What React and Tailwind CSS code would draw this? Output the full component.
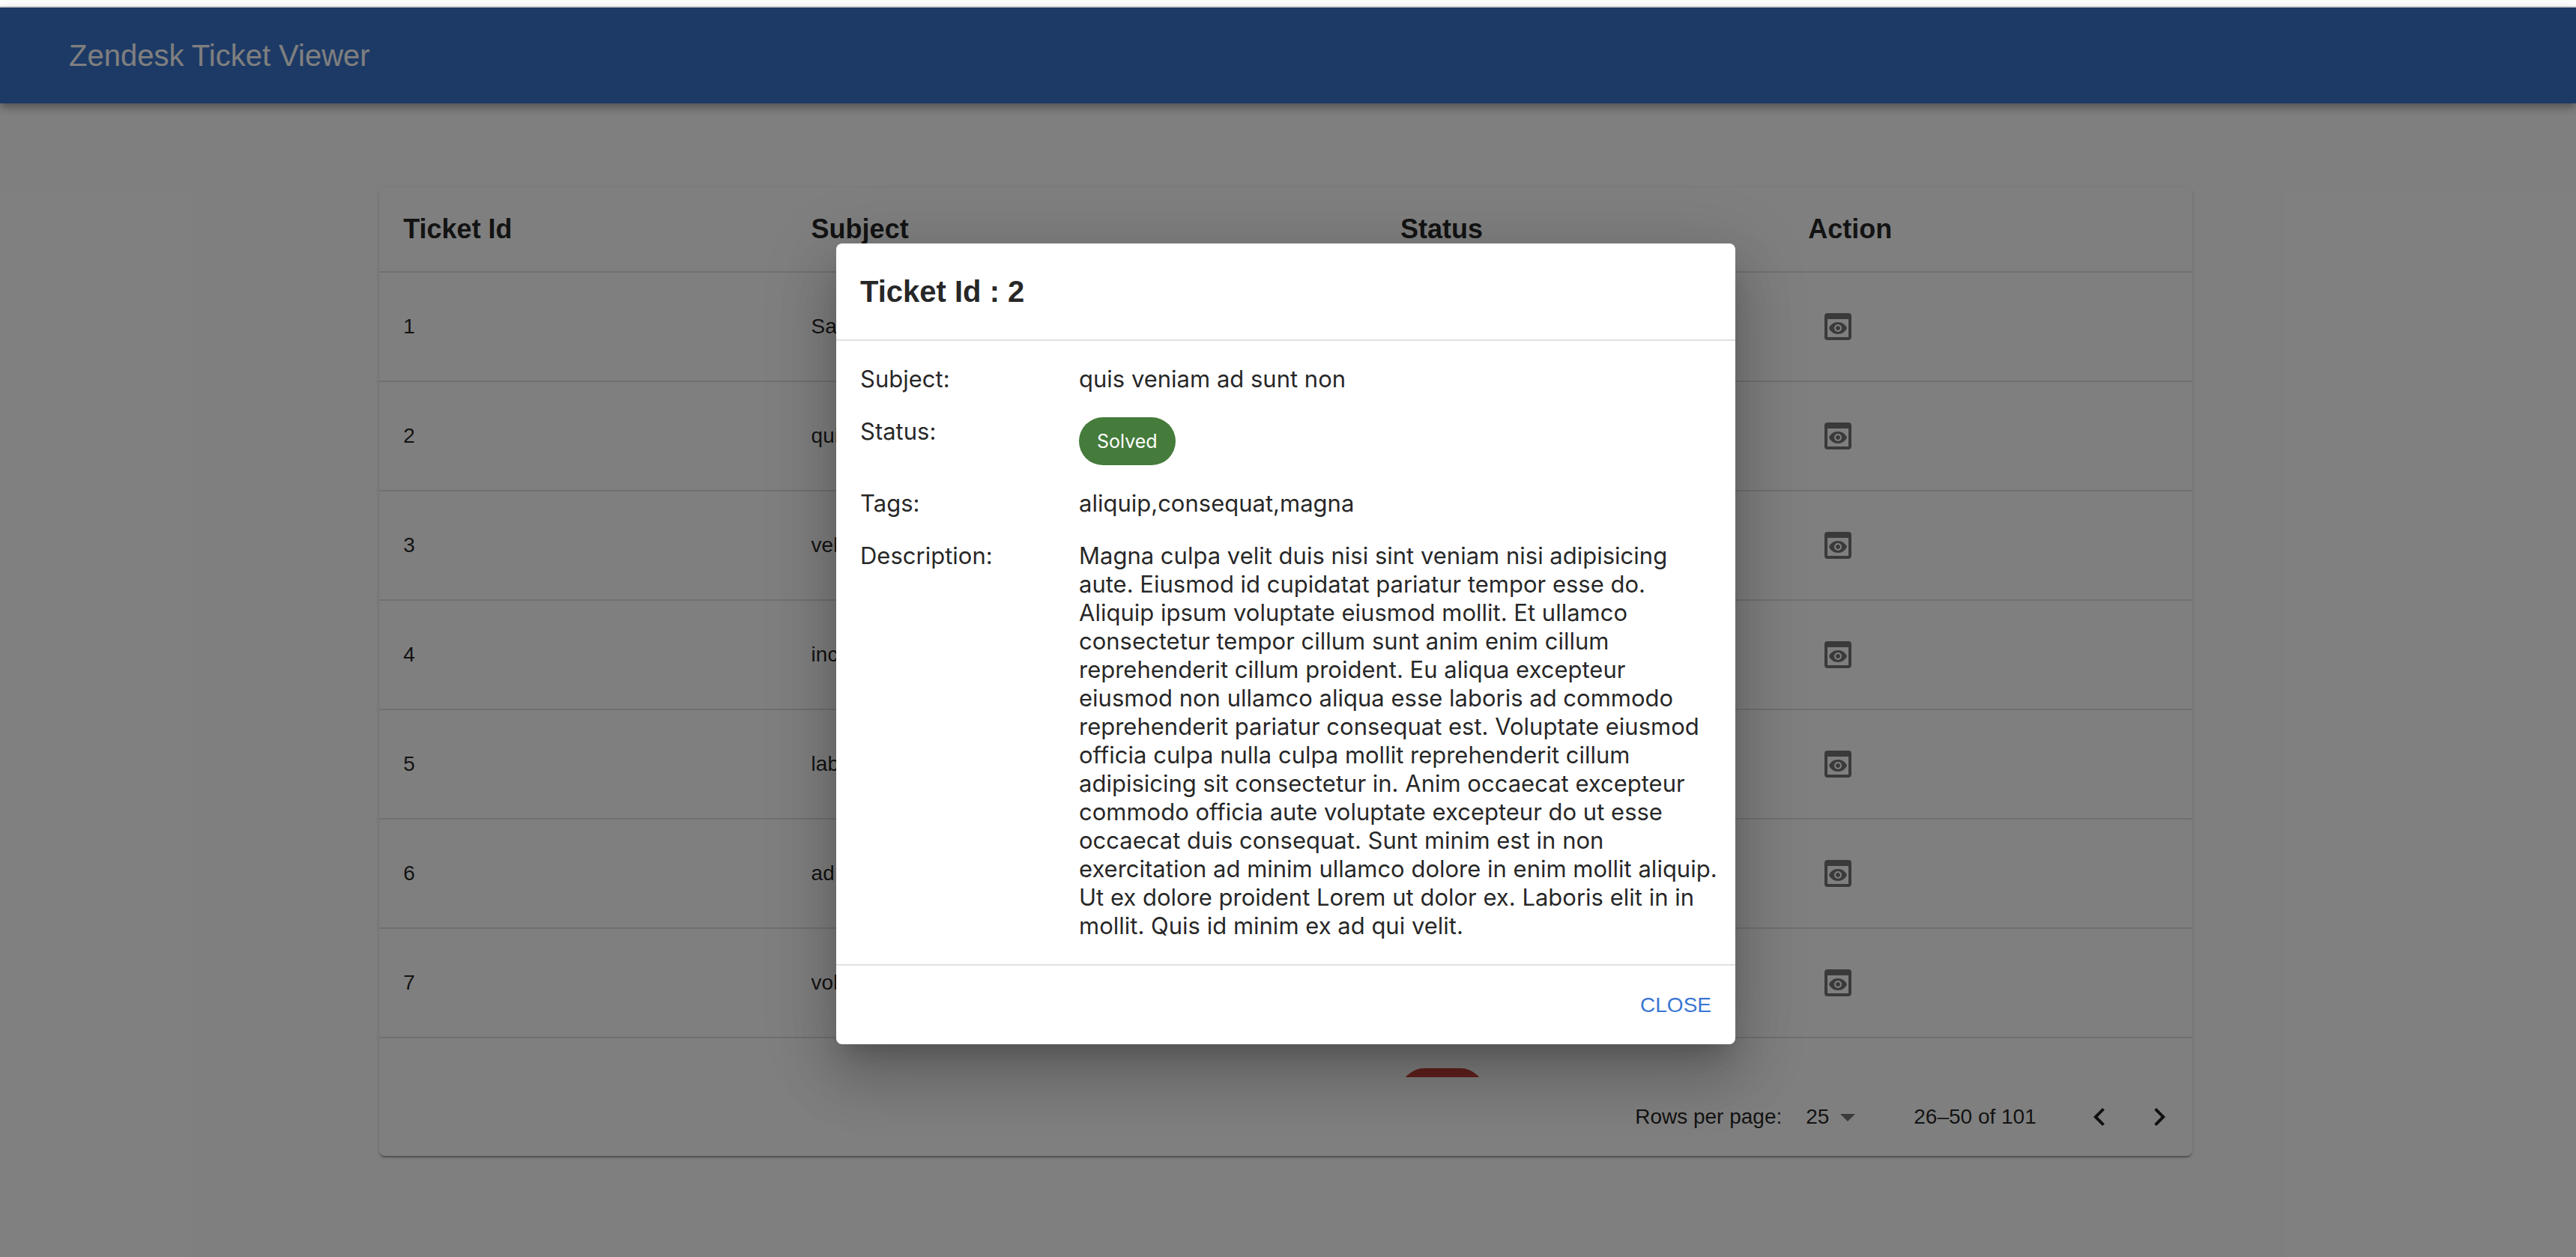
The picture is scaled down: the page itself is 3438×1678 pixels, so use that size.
import { MdPreview, MdArrowDropDown, MdKeyboardArrowLeft, MdKeyboardArrowRight } from "react-icons/md";

const SANS = "font-['Liberation_Sans',Arial,sans-serif]";

const tickets = [
  { id: 1, subject: "Sample ticket: Meet the ticket", status: "Open" },
  { id: 2, subject: "quis veniam ad sunt non", status: "Solved" },
  { id: 3, subject: "velit eiusmod reprehenderit officia cupidatat", status: "Open" },
  { id: 4, subject: "incididunt exercitation voluptate eu laboris", status: "Open" },
  { id: 5, subject: "laboris sint Lorem ex Lorem", status: "Open" },
  { id: 6, subject: "ad sunt qui aute ullamco", status: "Open" },
  { id: 7, subject: "voluptate dolor deserunt ea deserunt", status: "Open" },
  { id: 8, subject: "excepteur laborum ex occaecat Lorem", status: "Open" },
];

function Chip({ status, size = "text-[26px]" }) {
  const color = status === "Solved" ? "bg-[#457b3b]" : "bg-[#c3413a]";
  return (
    <span className={`inline-flex h-16 items-center rounded-full px-6 text-white ${size} ${color}`}>
      {status}
    </span>
  );
}

function Field({ label, children }) {
  return (
    <div className="flex">
      <dt className="w-[292px] shrink-0">{label}</dt>
      <dd className="min-w-0 flex-1">{children}</dd>
    </div>
  );
}

function TicketTable() {
  return (
    <div className="overflow-hidden rounded-lg bg-white shadow-[0_4px_2px_-2px_rgba(0,0,0,0.2),0_2px_2px_0_rgba(0,0,0,0.14),0_2px_6px_0_rgba(0,0,0,0.12)]">
      <div className="h-[1188px] overflow-hidden">
        <table className="w-full table-fixed border-separate border-spacing-0 text-left text-[28px] leading-10">
          <thead>
            <tr className="h-[114px] text-4xl leading-12">
              <th className="w-[22.5%] border-b-2 border-[#e0e0e0] px-8">Ticket Id</th>
              <th className="w-[32.5%] border-b-2 border-[#e0e0e0] px-8">Subject</th>
              <th className="w-[22.5%] border-b-2 border-[#e0e0e0] px-8">Status</th>
              <th className="border-b-2 border-[#e0e0e0] px-8">Action</th>
            </tr>
          </thead>
          <tbody>
            {tickets.map((t) => (
              <tr key={t.id} className="h-[146px]">
                <td className="border-b-2 border-[#e0e0e0] px-8">{t.id}</td>
                <td className="truncate border-b-2 border-[#e0e0e0] px-8">{t.subject}</td>
                <td className="border-b-2 border-[#e0e0e0] px-8">
                  <div className="flex">
                    <Chip status={t.status} />
                  </div>
                </td>
                <td className="border-b-2 border-[#e0e0e0] px-8">
                  <button type="button" aria-label={`View ticket ${t.id}`} className="block rounded-full p-4 text-black/54">
                    <MdPreview className="size-12" />
                  </button>
                </td>
              </tr>
            ))}
          </tbody>
        </table>
      </div>
      <div className="flex h-[105px] items-center justify-end pr-1 text-[28px] leading-10">
        <label htmlFor="rows">Rows per page:</label>
        <div className="mr-16 ml-4 flex items-center">
          <select id="rows" defaultValue="25" className="-mr-12 h-12 w-24 appearance-none bg-transparent pl-4">
            <option>25</option>
            <option>50</option>
            <option>100</option>
          </select>
          <MdArrowDropDown className="pointer-events-none size-12 text-black/54" />
        </div>
        <p className="mr-11">26–50 of 101</p>
        <button type="button" aria-label="Previous page" className="p-4">
          <MdKeyboardArrowLeft className="size-12" />
        </button>
        <button type="button" aria-label="Next page" className="p-4">
          <MdKeyboardArrowRight className="size-12" />
        </button>
      </div>
    </div>
  );
}

function TicketDialog() {
  return (
    <div
      role="dialog"
      aria-modal="true"
      aria-labelledby="dialog-title"
      className="w-[1200px] max-w-full rounded-lg bg-white shadow-[0_22px_30px_-14px_rgba(0,0,0,0.2),0_48px_76px_6px_rgba(0,0,0,0.14),0_18px_92px_16px_rgba(0,0,0,0.12)]"
    >
      <h2 id="dialog-title" className="px-8 py-8 text-[40px] leading-16 font-bold">
        Ticket Id : 2
      </h2>
      <dl className="flex flex-col gap-8 border-y-2 border-[#e0e0e0] py-8 pr-5 pl-8 font-['Inter',sans-serif] text-[31px] leading-[38px]">
        <Field label="Subject:">quis veniam ad sunt non</Field>
        <Field label="Status:">
          <div className="flex">
            <Chip status="Solved" size="text-[25px]" />
          </div>
        </Field>
        <Field label="Tags:">aliquip,consequat,magna</Field>
        <Field label="Description:">
          Magna culpa velit duis nisi sint veniam nisi adipisicing aute. Eiusmod id cupidatat pariatur tempor esse do.
          Aliquip ipsum voluptate eiusmod mollit. Et ullamco consectetur tempor cillum sunt anim enim cillum
          reprehenderit cillum proident. Eu aliqua excepteur eiusmod non ullamco aliqua esse laboris ad commodo
          reprehenderit pariatur consequat est. Voluptate eiusmod officia culpa nulla culpa mollit reprehenderit cillum
          adipisicing sit consectetur in. Anim occaecat excepteur commodo officia aute voluptate excepteur do ut esse
          occaecat duis consequat. Sunt minim est in non exercitation ad minim ullamco dolore in enim mollit aliquip. Ut
          ex dolore proident Lorem ut dolor ex. Laboris elit in in mollit. Quis id minim ex ad qui velit.
        </Field>
      </dl>
      <div className="flex justify-end p-4">
        <button type="button" className="h-[73px] px-4 text-[28px] text-[#3a76d2]">
          CLOSE
        </button>
      </div>
    </div>
  );
}

export default function App() {
  return (
    <div className={`h-screen overflow-hidden bg-white pt-2 text-black/87 ${SANS}`}>
      <div className="h-0.5 bg-[#dddddd]" />
      <div className="relative h-full">
        <header className="flex h-32 items-center bg-[#3b74cc] px-23 shadow-[0_4px_8px_-2px_rgba(0,0,0,0.2),0_8px_10px_0_rgba(0,0,0,0.14),0_2px_20px_0_rgba(0,0,0,0.12)]">
          <h1 className="text-[40px] leading-16 text-white">Zendesk Ticket Viewer</h1>
        </header>
        <main className="pt-28 pr-1.5">
          <div className="mx-auto w-[70.5%]">
            <TicketTable />
          </div>
        </main>
        <div className="absolute inset-0 flex items-start justify-center bg-black/50 pt-[315px] pr-1.5">
          <TicketDialog />
        </div>
      </div>
    </div>
  );
}
